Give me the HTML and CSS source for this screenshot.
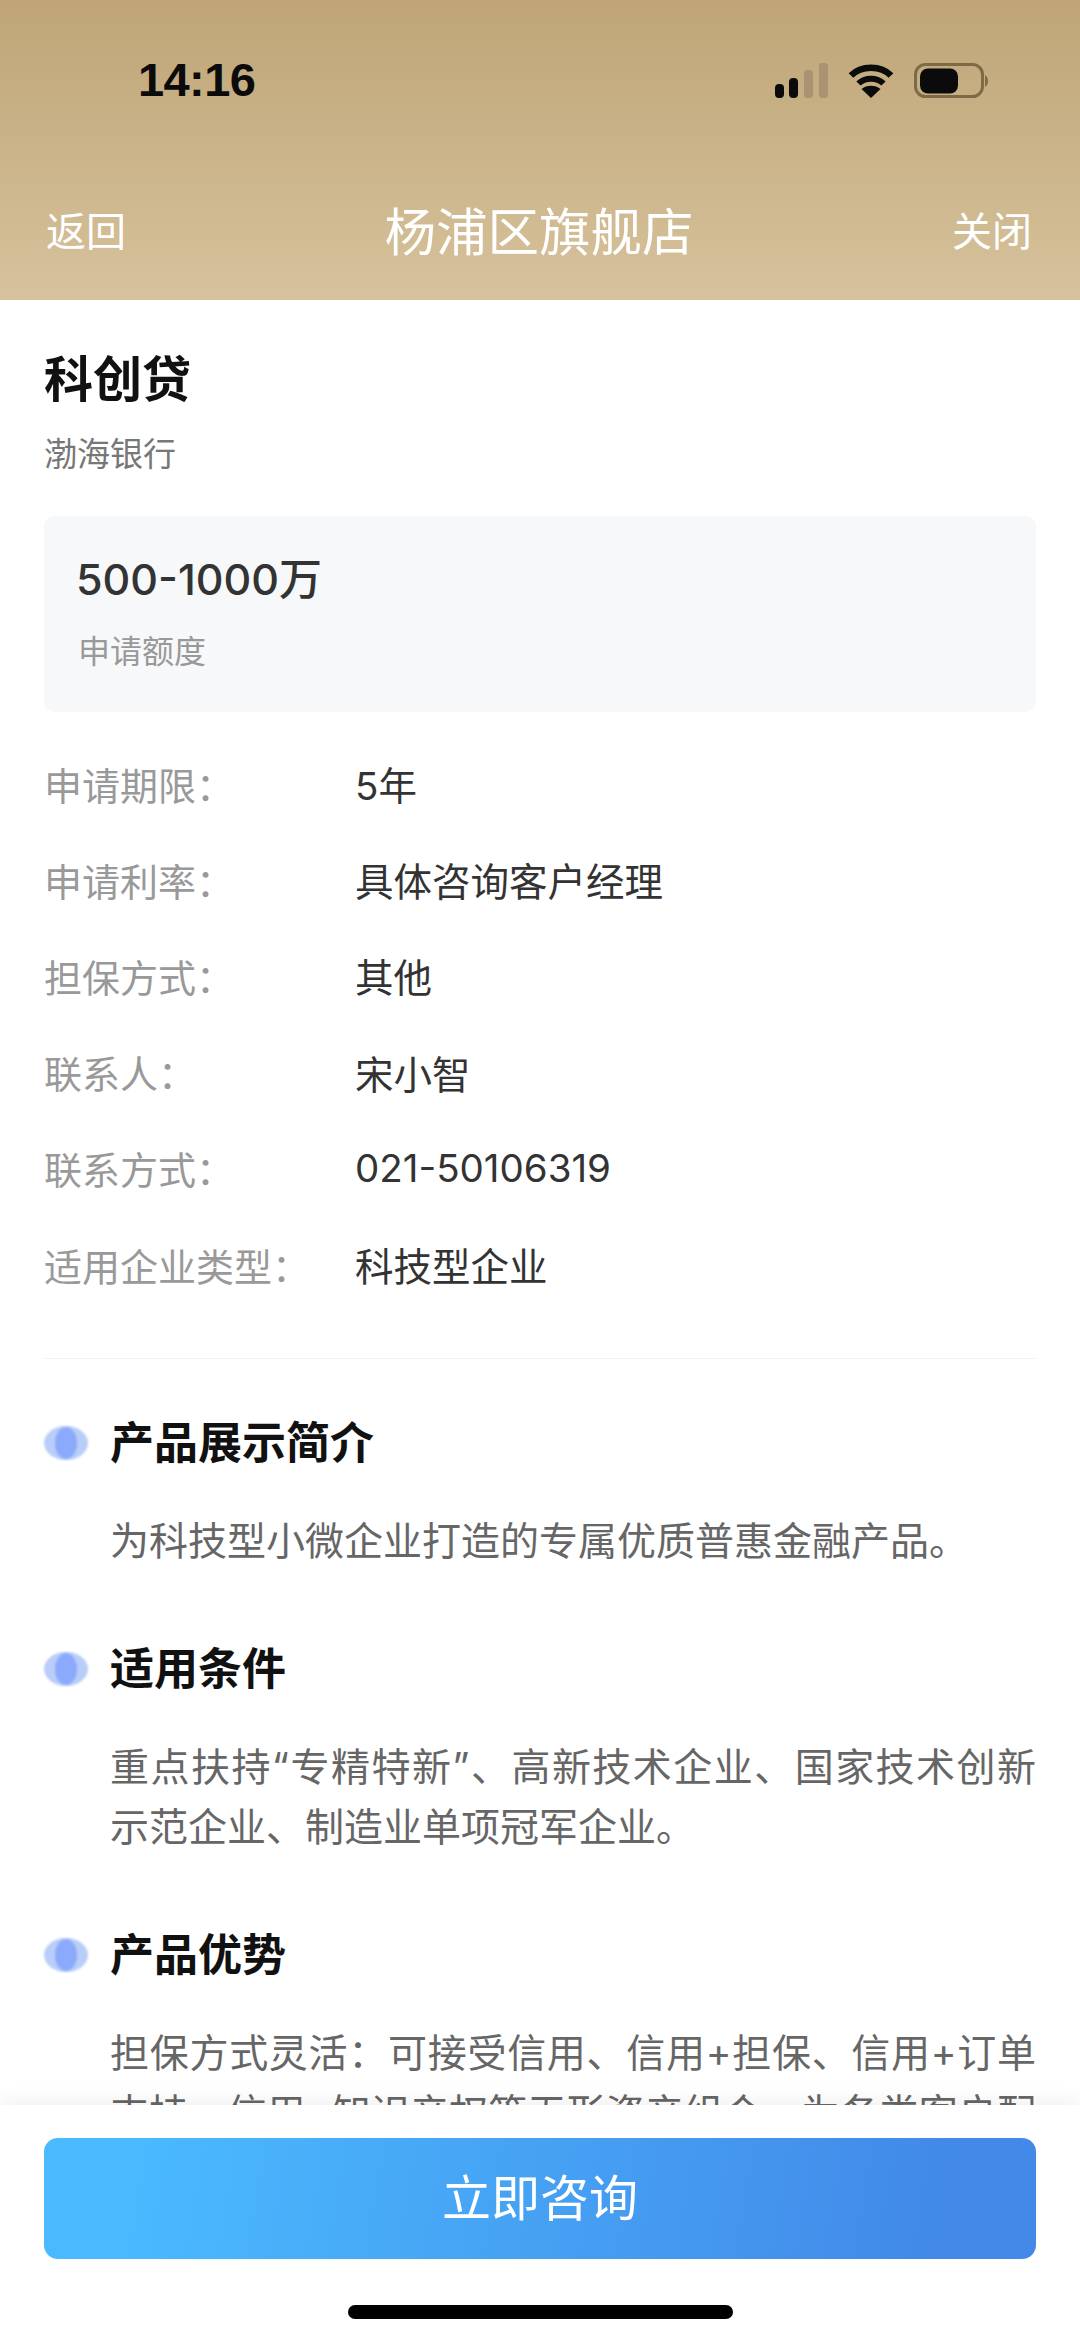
FILE: index.html
```html
<!DOCTYPE html>
<html lang="zh-CN">
<head>
<meta charset="utf-8">
<title>杨浦区旗舰店</title>
<link rel="stylesheet" href="styles.css">
</head>
<body>
<div class="phone">
  <header class="header">
    <div class="status">
      <span class="time">14:16</span>
      <div class="status-icons">
        <svg class="signal" width="54" height="36" viewBox="0 0 54 36"><rect x="1" y="21" width="9" height="14" rx="4" fill="#0b0b0b"/><rect x="15" y="15" width="9" height="20" rx="4" fill="#0b0b0b"/><rect x="30" y="7" width="9" height="28" rx="3" fill="#a99372"/><rect x="45" y="0" width="9" height="35" rx="3" fill="#a99372"/></svg>
        <svg class="wifi" width="46" height="36" viewBox="0 0 46 36"><path d="M3 12.500 C13 2 33 2 43 12.500" fill="none" stroke="#0b0b0b" stroke-width="6.500"/><path d="M10.500 20.500 C17 14 29 14 35.500 20.500" fill="none" stroke="#0b0b0b" stroke-width="6"/><path d="M23 35 L13.500 26 C18 21.500 28 21.500 32.500 26 Z" fill="#0b0b0b"/></svg>
        <svg class="battery" width="76" height="36" viewBox="0 0 76 36"><rect x="1.500" y="1.500" width="67" height="32" rx="10" fill="none" stroke="#7f6a48" stroke-width="3"/><rect x="6" y="5.500" width="38" height="25" rx="8" fill="#0b0b0b"/><path d="M71 12 C75 14 75 22 71 24 Z" fill="#7f6a48"/></svg>
      </div>
    </div>
    <nav class="nav">
      <span class="nav-link">返回</span>
      <span class="nav-title">杨浦区旗舰店</span>
      <span class="nav-link">关闭</span>
    </nav>
  </header>

  <main class="content">
    <h1 class="product">科创贷</h1>
    <p class="bank">渤海银行</p>
    <section class="quota">
      <div class="quota-value">500-1000万</div>
      <div class="quota-label">申请额度</div>
    </section>
    <dl class="facts">
      <div class="fact"><dt>申请期限：</dt><dd>5年</dd></div>
      <div class="fact"><dt>申请利率：</dt><dd>具体咨询客户经理</dd></div>
      <div class="fact"><dt>担保方式：</dt><dd>其他</dd></div>
      <div class="fact"><dt>联系人：</dt><dd>宋小智</dd></div>
      <div class="fact"><dt>联系方式：</dt><dd>021-50106319</dd></div>
      <div class="fact"><dt>适用企业类型：</dt><dd>科技型企业</dd></div>
    </dl>
    <section class="block first">
      <h2 class="block-title"><i class="dot"></i>产品展示简介</h2>
      <p class="block-text">为科技型小微企业打造的专属优质普惠金融产品。</p>
    </section>
    <section class="block">
      <h2 class="block-title"><i class="dot"></i>适用条件</h2>
      <p class="block-text">重点扶持“专精特新”、高新技术企业、国家技术创新示范企业、制造业单项冠军企业。</p>
    </section>
    <section class="block">
      <h2 class="block-title"><i class="dot"></i>产品优势</h2>
      <p class="block-text cut">担保方式灵活：可接受信用、信用+担保、信用+订单支持、信用+知识产权等无形资产组合，为各类客户配</p>
    </section>
  </main>

  <footer class="footer">
    <button class="cta">立即咨询</button>
    <div class="home"></div>
  </footer>
</div>
</body>
</html>
```
FILE: styles.css
```css
* { box-sizing: border-box; }
html, body { margin: 0; padding: 0; background: #fff; }
body { font-family: "Noto Sans CJK SC", "Liberation Sans", sans-serif; }
.phone { position: relative; width: 1080px; height: 2341px; overflow: hidden; background: #fff; }

.header { height: 300px; background: linear-gradient(180deg, #bfa577 0%, #d6c29c 100%); }
.status { height: 177px; display: flex; justify-content: space-between; padding: 54px 90px 0 138px; }
.time { font-family: "Liberation Sans", sans-serif; font-weight: 700; font-size: 47px; line-height: 52px; letter-spacing: -0.6px; color: #0b0b0b; }
.status-icons { display: flex; align-items: flex-start; padding-top: 9px; }
.signal { margin-right: 20px; }
.wifi { margin-right: 20px; }
.nav { display: flex; align-items: center; justify-content: space-between; padding: 0 48px 0 46px; height: 104px; }
.nav-link { font-size: 40px; line-height: 104px; color: #fff; }
.nav-title { font-size: 51.500px; line-height: 104px; color: #fff; }

.content { height: 1805px; overflow: hidden; padding: 0 44px; }
.product { margin: 0; padding-top: 46px; font-size: 49px; line-height: 60px; font-weight: 700; color: #111; }
.bank { margin: 23px 0 0; font-size: 33px; line-height: 46px; color: #777; }
.quota { margin-top: 41px; height: 196px; padding: 36px 32px 0; background: #f7f8fa; border-radius: 10px; }
.quota-value { font-family: "Inter", "Noto Sans CJK SC", sans-serif; font-size: 43px; line-height: 54px; font-weight: 500; color: #333; }
.quota-label { margin-top: 20px; font-size: 32px; line-height: 46px; color: #999; padding-left: 2px; }
.facts { margin: 23px 0 0; padding-bottom: 46px; border-bottom: 1px solid #f1f1f1; }
.fact { display: flex; height: 96.200px; align-items: center; }
.fact dt { width: 311px; font-size: 38px; color: #999; }
.fact dd { margin: 0; font-family: "Inter", "Noto Sans CJK SC", sans-serif; font-size: 38.500px; color: #333; }

.block { margin-top: 68px; }
.block.first { margin-top: 54px; }
.block-title { display: flex; align-items: center; margin: 0; font-size: 44px; line-height: 54px; font-weight: 700; color: #111; }
.dot { position: relative; width: 44px; height: 34px; margin: 6px 22px 0 0; border-radius: 50%; background: #b8cdf8; filter: blur(1.200px); }
.dot::after { content: ""; position: absolute; left: 11px; top: 1px; width: 22px; height: 32px; border-radius: 50%; background: #8caafb; }
.block-text { margin: 44px 0 0; padding-left: 66px; font-family: "Inter", "Noto Sans CJK SC", sans-serif; font-size: 39px; line-height: 60px; color: #666; text-align: justify; }
.block-text.cut { text-align-last: justify; }

.footer { position: absolute; left: 0; right: 0; bottom: 0; height: 236px; padding: 33px 44px 0; background: #fff; box-shadow: 0 -5px 18px rgba(0,0,0,.06); }
.cta { display: block; width: 100%; height: 121px; padding: 0 0 8px; border: 0; border-radius: 14px; font-family: inherit; font-size: 49px; color: #fff; background: linear-gradient(100deg, #4ab9fe 10%, #4289e8 90%); }
.home { width: 385px; height: 14px; margin: 46px auto 0; background: #000; border-radius: 7px; }
```
